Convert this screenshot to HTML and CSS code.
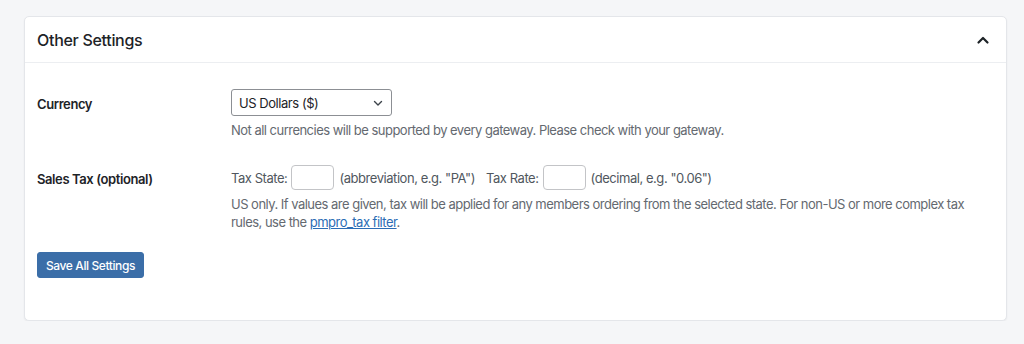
FILE: index.html
```html
<!DOCTYPE html>
<html lang="en">
  <head>
    <meta charset="utf-8">
    <title>Other Settings</title>
    <link rel="stylesheet" href="styles.css">
  </head>
  <body>
    <div class="section">
      <div class="section-header">
        <h2 class="section-title">Other Settings</h2>
        <button class="toggle" aria-label="Collapse">
          <svg width="14" height="14" viewBox="0 0 14 14">
            <path d="M2.5 9.5 L7 5 L11.5 9.5" fill="none" stroke="#1d2327" stroke-width="2.2" stroke-linecap="round" stroke-linejoin="round"/>
          </svg>
        </button>
      </div>
      <div class="section-body">
        <div class="row">
          <div class="row-label">Currency</div>
          <div class="row-field">
            <div class="select">
              <span>US Dollars ($)</span>
              <svg width="12" height="12" viewBox="0 0 12 12">
                <path d="M2.5 4.5 L6 8 L9.5 4.5" fill="none" stroke="#3c434a" stroke-width="1.4" stroke-linecap="round" stroke-linejoin="round"/>
              </svg>
            </div>
            <p class="description">Not all currencies will be supported by every gateway. Please check with your gateway.</p>
          </div>
        </div>
        <div class="row row-tax">
          <div class="row-label">Sales Tax (optional)</div>
          <div class="row-field">
            <div class="tax-line">
              <span>Tax State:</span>
              <input class="small-input state" type="text">
              <span class="hint">(abbreviation, e.g. "PA")</span>
              <span class="rate-label">Tax Rate:</span>
              <input class="small-input rate" type="text">
              <span class="hint">(decimal, e.g. "0.06")</span>
            </div>
            <p class="description">US only. If values are given, tax will be applied for any members ordering from the selected state. For non-US or more complex tax rules, use the <a href="#">pmpro_tax filter</a>.</p>
          </div>
        </div>
        <button class="button-primary">Save All Settings</button>
      </div>
    </div>
  </body>
</html>
```

FILE: styles.css
```css
body {
  margin: 0;
  padding: 16px 17px 0 24px;
  background: #f5f6f8;
  font-family: Inter, "Liberation Sans", sans-serif;
  font-size: 13px;
  letter-spacing: -0.45px;
  color: #1d2327;
}

.section {
  background: #fff;
  border: 1px solid #e4e6ea;
  border-radius: 5px;
  box-shadow: 0 1px 2px rgba(0, 0, 0, 0.06);
  height: 305px;
  box-sizing: border-box;
}

.section-header {
  display: flex;
  align-items: center;
  justify-content: space-between;
  height: 45px;
  padding: 0 16px 0 12px;
  border-bottom: 1px solid #eceef1;
}

.section-title {
  margin: 0;
  font-size: 16px;
  font-weight: 500;
  letter-spacing: -0.3px;
}

.toggle {
  border: none;
  background: transparent;
  padding: 0;
  display: flex;
  cursor: pointer;
}

.section-body {
  padding: 26px 12px 0 12px;
}

.row {
  display: flex;
}

.row-label {
  width: 194px;
  flex: none;
  font-weight: 600;
  letter-spacing: -0.4px;
  padding-top: 7px;
}

.row-field {
  flex: 1;
}

.select {
  width: 161px;
  height: 27px;
  box-sizing: border-box;
  border: 1px solid #8c8f94;
  border-radius: 3px;
  display: flex;
  align-items: center;
  justify-content: space-between;
  padding: 0 7px 0 7px;
  font-size: 13px;
}

.description {
  margin: 5px 0 0 0;
  color: #646970;
  line-height: 18px;
  letter-spacing: -0.52px;
}

.row-tax {
  margin-top: 26px;
}

.row-tax .row-label {
  padding-top: 6px;
}

.tax-line {
  display: flex;
  align-items: center;
  color: #50575e;
}

.small-input {
  width: 43px;
  height: 25px;
  box-sizing: border-box;
  border: 1px solid #c3c4c7;
  border-radius: 4px;
  margin: 0 5px 0 4px;
  padding: 0;
}

.rate-label {
  margin-left: 11px;
}

.row-tax .description {
  margin-top: 5px;
}

.description a {
  color: #2c6db5;
}

.button-primary {
  margin-top: 21px;
  height: 26px;
  padding: 0 8px;
  background: #3b6ea8;
  color: #fff;
  border: 1px solid #3b6ea8;
  border-radius: 3px;
  font-family: inherit;
  font-size: 12px;
  font-weight: 500;
  letter-spacing: -0.4px;
  cursor: pointer;
}
```
